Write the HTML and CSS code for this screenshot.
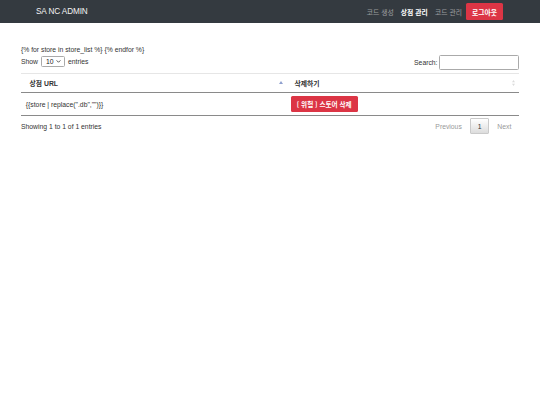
FILE: index.html
```html
<!DOCTYPE html>
<html lang="ko">
<head>
<meta charset="utf-8">
<title>SA NC ADMIN</title>
<link rel="stylesheet" href="styles.css">
</head>
<body>
<nav class="navbar">
  <a class="brand" href="#">SA NC ADMIN</a>
  <div class="nav-right">
    <a class="nav-link" href="#">코드 생성</a>
    <a class="nav-link active" href="#">상점 관리</a>
    <a class="nav-link" href="#">코드 관리</a>
    <a class="btn-logout" href="#">로그아웃</a>
  </div>
</nav>
<main class="content">
  <div class="tpl-line">{% for store in store_list %} {% endfor %}</div>
  <div class="controls">
    <label class="length">Show <span class="select">10 <svg class="caret" viewBox="0 0 6 4" width="5" height="3"><path d="M0.5 0.5 L3 3 L5.5 0.5" fill="none" stroke="#333" stroke-width="1.1"/></svg></span> entries</label>
    <label class="search">Search:<span class="search-input"></span></label>
  </div>
  <table class="data">
    <thead>
      <tr>
        <th class="col1">상점 URL<svg class="sort asc" viewBox="0 0 4 3" width="4" height="3"><path d="M0 3 L2 0 L4 3 Z" fill="#8fa0cf"/></svg></th>
        <th class="col2">삭제하기<svg class="sort both" viewBox="0 0 4 8" width="3" height="6"><path d="M0 3 L2 0 L4 3 Z M0 5 L2 8 L4 5 Z" fill="#dcdcdc"/></svg></th>
      </tr>
    </thead>
    <tbody>
      <tr>
        <td>{{store | replace(".db","")}}</td>
        <td><a class="btn-danger" href="#">[ 위험 ] 스토어 삭제</a></td>
      </tr>
    </tbody>
  </table>
  <div class="footer-row">
    <div class="info">Showing 1 to 1 of 1 entries</div>
    <div class="paginate">
      <span class="page-btn disabled">Previous</span>
      <span class="page-btn current">1</span>
      <span class="page-btn disabled">Next</span>
    </div>
  </div>
</main>
</body>
</html>
```
FILE: styles.css
```css
html, body {
  margin: 0;
  padding: 0;
  background: #fff;
}
body {
  font-family: "Liberation Sans", Arial, "Noto Sans CJK KR", sans-serif;
  font-size: 6.8px;
  color: #333;
}
a { text-decoration: none; }

.navbar {
  height: 23px;
  background: #343a40;
  display: flex;
  align-items: center;
  justify-content: space-between;
  padding: 0 37px 0 36px;
}
.brand {
  color: #f4f4f4;
  font-size: 8.2px;
  letter-spacing: -0.1px;
}
.nav-right {
  display: flex;
  align-items: center;
  height: 23px;
}
.nav-link {
  color: rgba(255, 255, 255, 0.5);
  font-family: "Noto Sans CJK KR", sans-serif;
  font-size: 6.8px;
  padding: 0 3.6px;
}
.nav-link.active {
  color: #fff;
  font-weight: 700;
}
.btn-logout {
  margin-left: 0.5px;
  background: #dc3545;
  color: #fff;
  font-family: "Noto Sans CJK KR", sans-serif;
  font-weight: 700;
  font-size: 6.8px;
  height: 17px;
  padding: 0 6px;
  display: flex;
  align-items: center;
  border-radius: 1.5px;
}

.content {
  padding: 0 21px;
}
.tpl-line {
  margin-top: 22px;
  line-height: 10px;
  height: 10px;
}
.controls {
  display: flex;
  justify-content: space-between;
  align-items: flex-start;
  height: 15px;
}
.length {
  display: flex;
  align-items: center;
  height: 11px;
  margin-top: 1px;
}
.select {
  display: inline-flex;
  align-items: center;
  justify-content: space-between;
  box-sizing: border-box;
  width: 24px;
  height: 11px;
  margin: 0 3px 0 3px;
  padding: 0 3px 0 4px;
  border: 1px solid #aaa;
  border-radius: 1.5px;
  background: #fff;
  color: #222;
}
.caret { display: block; }
.search {
  display: flex;
  align-items: center;
  height: 15px;
}
.search-input {
  display: block;
  box-sizing: border-box;
  width: 80px;
  height: 15px;
  margin-left: 1.5px;
  border: 1px solid #aaa;
  border-radius: 1.5px;
  background: #fff;
}

.data {
  margin-top: 3px;
  width: 498px;
  table-layout: fixed;
  border-collapse: collapse;
  border-top: 1px solid #e6e6e6;
}
.data th {
  position: relative;
  text-align: left;
  font-weight: 700;
  font-family: "Liberation Sans", Arial, "Noto Sans CJK KR", sans-serif;
  line-height: 9px;
  padding: 4.5px 8.6px;
  border-bottom: 1px solid #8a8a8a;
}
.data th.col1 { width: 247.8px; }
.sort {
  position: absolute;
  right: 3px;
  top: 7px;
}
.sort.both { top: 6px; right: 4px; }
.data td {
  line-height: 9px;
  padding: 3px 4.8px;
  border-bottom: 1px solid #8a8a8a;
  vertical-align: middle;
}
.btn-danger {
  display: inline-flex;
  align-items: center;
  height: 16px;
  padding: 0 6px;
  background: #dc3545;
  color: #fff;
  font-family: "Noto Sans CJK KR", sans-serif;
  font-weight: 700;
  font-size: 6.6px;
  border-radius: 1.5px;
  vertical-align: middle;
}

.footer-row {
  display: flex;
  justify-content: space-between;
  align-items: center;
  margin-top: 2px;
  height: 16px;
}
.paginate {
  display: flex;
  align-items: center;
}
.page-btn {
  box-sizing: border-box;
  height: 16px;
  display: flex;
  align-items: center;
  padding: 0 6.7px;
  margin-left: 1px;
  border: 1px solid transparent;
  border-radius: 1px;
}
.page-btn.disabled { color: #999; }
.page-btn.current {
  color: #333;
  border-color: #cacaca;
  background: linear-gradient(to bottom, #ffffff 0%, #dcdcdc 100%);
  padding: 0 6.2px;
}
```
